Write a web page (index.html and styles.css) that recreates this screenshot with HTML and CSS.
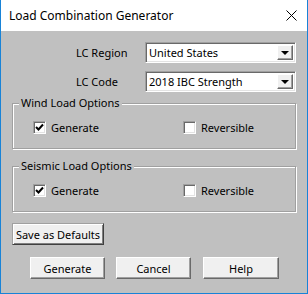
FILE: index.html
```html
<!DOCTYPE html>
<html lang="en">
<head>
    <meta charset="UTF-8">
    <meta name="viewport" content="width=device-width, initial-scale=1.0">
    <title>Load Combination Generator</title>
    <link rel="stylesheet" href="styles.css">
</head>
<body>
    <div class="window">
        <div class="titlebar">
            <span class="title">Load Combination Generator</span>
            <svg class="close" width="11" height="11" viewBox="0 0 11 11">
                <path d="M0.5 0.5 L10.5 10.5 M10.5 0.5 L0.5 10.5" stroke="#000" stroke-width="1" fill="none"/>
            </svg>
        </div>

        <div class="content">
            <div class="field">
                <label>LC Region</label>
                <div class="combo">
                    <span class="combo-text">United States</span>
                    <span class="combo-btn"><i class="arrow"></i></span>
                </div>
            </div>
            <div class="field">
                <label>LC Code</label>
                <div class="combo">
                    <span class="combo-text">2018 IBC Strength</span>
                    <span class="combo-btn"><i class="arrow"></i></span>
                </div>
            </div>

            <div class="group">
                <span class="group-title">Wind Load Options</span>
                <div class="checks">
                    <div class="check"><span class="box"><svg width="9" height="9" viewBox="0 0 9 9"><path d="M1 4 L3.5 6.5 L8 1.5" stroke="#000" stroke-width="2" fill="none"/></svg></span>Generate</div>
                    <div class="check"><span class="box"></span>Reversible</div>
                </div>
            </div>

            <div class="group">
                <span class="group-title">Seismic Load Options</span>
                <div class="checks">
                    <div class="check"><span class="box"><svg width="9" height="9" viewBox="0 0 9 9"><path d="M1 4 L3.5 6.5 L8 1.5" stroke="#000" stroke-width="2" fill="none"/></svg></span>Generate</div>
                    <div class="check"><span class="box"></span>Reversible</div>
                </div>
            </div>

            <button class="btn default">Save as Defaults</button>

            <div class="actions">
                <button class="btn">Generate</button>
                <button class="btn">Cancel</button>
                <button class="btn wide">Help</button>
            </div>
        </div>
    </div>
</body>
</html>
```

FILE: styles.css
```css
* {
    box-sizing: border-box;
}
body {
    margin: 0;
    font-family: "Noto Sans", "Liberation Sans", sans-serif;
    font-size: 11px;
    color: #000;
    background: #fff;
}
.window {
    width: 308px;
    height: 294px;
    border: 1px solid #1883d7;
    border-top: none;
    background: #c0c0c0;
    display: flex;
    flex-direction: column;
}
.titlebar {
    height: 31px;
    background: #fff;
    display: flex;
    align-items: center;
    justify-content: space-between;
    padding: 0 10px 0 8px;
}
.title {
    font-size: 12px;
}
.content {
    padding: 11px 10px 0 11px;
}
.field {
    display: grid;
    grid-template-columns: 133px 151px;
    align-items: center;
    height: 21px;
    margin-bottom: 8px;
}
.field label {
    padding-left: 64px;
}
.combo {
    height: 21px;
    display: flex;
    align-items: center;
    justify-content: space-between;
    background: #fff;
    border: 1px solid;
    border-color: #a0a0a0 #fff #fff #a0a0a0;
    box-shadow: inset 1px 1px 0 #696969, inset -1px -1px 0 #e3e3e3;
    padding: 2px;
}
.combo-text {
    padding-left: 1px;
}
.combo-btn {
    width: 16px;
    height: 15px;
    background: #f0f0f0;
    border: 1px solid;
    border-color: #fff #696969 #696969 #fff;
    box-shadow: inset -1px -1px 0 #a0a0a0;
    display: flex;
    align-items: center;
    justify-content: center;
}
.arrow {
    width: 0;
    height: 0;
    border-left: 4px solid transparent;
    border-right: 4px solid transparent;
    border-top: 4px solid #000;
}
.group {
    position: relative;
    margin-top: 11px;
    margin-bottom: 17px;
    border: 1px solid #a0a0a0;
    box-shadow: 1px 1px 0 #fff, inset 1px 1px 0 #fff;
    padding: 17px 0 14px 20px;
    width: 284px;
}
.group + .group {
    margin-top: 0;
}
.group-title {
    position: absolute;
    top: -9px;
    left: 6px;
    padding: 0 2px;
    background: #c0c0c0;
    line-height: 15px;
}
.checks {
    display: grid;
    grid-template-columns: 150px 1fr;
}
.check {
    display: flex;
    align-items: center;
    height: 13px;
}
.box {
    width: 13px;
    height: 13px;
    margin-right: 5px;
    background: #fff;
    border: 1px solid;
    border-color: #a0a0a0 #fff #fff #a0a0a0;
    box-shadow: inset 1px 1px 0 #696969, inset -1px -1px 0 #e3e3e3;
    display: flex;
    align-items: center;
    justify-content: center;
}
.btn {
    font-family: inherit;
    font-size: 11px;
    color: #000;
    height: 22px;
    background: #f0f0f0;
    border: 1px solid;
    border-color: #fff #696969 #696969 #fff;
    box-shadow: inset -1px -1px 0 #a0a0a0;
    padding: 0;
    display: block;
}
.btn.default {
    width: 92px;
    margin-top: -6px;
    border-color: #a0a0a0 #404040 #404040 #a0a0a0;
    box-shadow: inset 1px 1px 0 #fff, inset -1px -1px 0 #808080;
}
.actions {
    display: flex;
    gap: 11px;
    margin: 12px 0 0 18px;
}
.actions .btn {
    width: 75px;
}
.actions .btn.wide {
    width: 76px;
    margin-left: 1px;
}
```
